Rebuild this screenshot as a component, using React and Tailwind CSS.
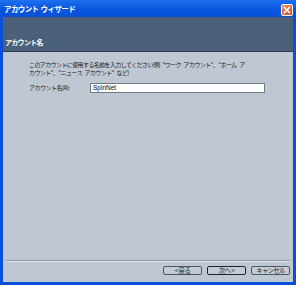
export default function App() {
  const jp = { fontFamily: '"Noto Sans CJK JP", "Noto Sans", sans-serif' };
  return (
    <div className="w-[296px] h-[285px] flex flex-col bg-[#0a4fd8] overflow-hidden" style={jp}>
      {/* title bar */}
      <div className="h-[17px] shrink-0 flex items-center justify-between pl-[4px] pr-[3px] bg-gradient-to-b from-[#1f6ff0] via-[#0a57e0] to-[#0750d6]">
        <span className="text-white text-[7.5px] font-bold leading-none tracking-[-0.6px] [word-spacing:1px]">アカウント ウィザード</span>
        <div className="w-[12px] h-[12px] mt-[2px] rounded-[2px] border border-white bg-gradient-to-br from-[#f08a5c] to-[#d6431c] flex items-center justify-center">
          <svg width="8" height="8" viewBox="0 0 8 8">
            <path d="M1.5 1.5 L6.5 6.5 M6.5 1.5 L1.5 6.5" stroke="white" strokeWidth="1.6" strokeLinecap="square" />
          </svg>
        </div>
      </div>
      {/* client */}
      <div className="flex-1 flex flex-col mx-[3px] mb-[3px] bg-[#bfc8d2]">
        <div className="h-[35px] shrink-0 bg-[#4b6179] border-b border-[#2d3a48] pl-[2px] pt-[9px]">
          <span className="text-white text-[7px] font-bold leading-none tracking-[-0.7px]">アカウント名</span>
        </div>
        <div className="flex-1 flex flex-col pl-[26px] pt-[9px]">
          <div className="text-[6px] leading-[7.5px] text-[#1a1a1a] tracking-[-0.6px] [word-spacing:2px] whitespace-pre">
            <div>{'このアカウントに使用する名前を入力してください(例 "ワーク アカウント"、"ホーム ア'}</div>
            <div>{'カウント"、"ニュース アカウント" など)'}</div>
          </div>
          <div className="flex items-center mt-[7px]">
            <span className="w-[61px] text-[6px] leading-none text-[#1a1a1a] tracking-[-0.5px] whitespace-nowrap">アカウント名(A):</span>
            <div className="w-[175px] h-[10px] bg-white border border-[#6f7c88] flex items-center pl-[2px]">
              <span className="text-[6.5px] leading-none text-black" style={{ fontFamily: '"Liberation Sans", sans-serif' }}>SpinNet</span>
            </div>
          </div>
          <div className="flex-1" />
        </div>
        <div className="mx-[3px] h-[2px] shrink-0 border-t border-[#8c98a3] border-b-white/60 border-b" />
        <div className="h-[20px] shrink-0 flex items-start justify-end gap-[5px] pr-[3px] pt-[4px]">
          <div className="w-[39px] h-[9px] rounded-[2px] border border-[#4a5663] bg-[#c3ccd5] flex items-center justify-center text-[6.5px] leading-none text-[#222] tracking-[-0.6px]">&lt; 戻る</div>
          <div className="w-[39px] h-[9px] rounded-[2px] border border-[#1b2430] bg-[#c3ccd5] flex items-center justify-center text-[6.5px] leading-none text-[#222] tracking-[-0.6px]">次へ &gt;</div>
          <div className="w-[39px] h-[9px] rounded-[2px] border border-[#4a5663] bg-[#c3ccd5] flex items-center justify-center text-[6.5px] leading-none text-[#222] tracking-[-0.8px]">キャンセル</div>
        </div>
      </div>
    </div>
  );
}
